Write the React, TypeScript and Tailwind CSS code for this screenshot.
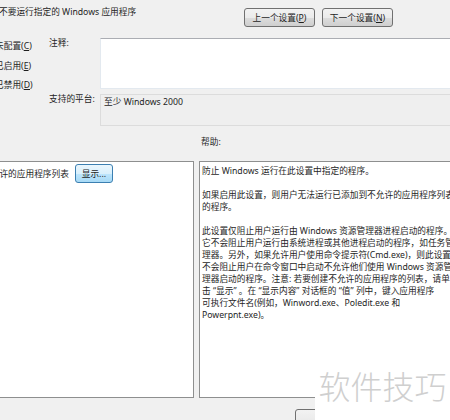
const btn =
  "flex items-center justify-center rounded-[3px] border border-[#707070] bg-[linear-gradient(#f2f2f2_0%,#ebebeb_50%,#dddddd_51%,#cfcfcf_100%)] text-[#1e1e1e]";

const helpLines: (string | null)[] = [
  "防止 Windows 运行在此设置中指定的程序。",
  null,
  "如果启用此设置，则用户无法运行已添加到不允许的应用程序列表",
  "的程序。",
  null,
  "此设置仅阻止用户运行由 Windows 资源管理器进程启动的程序。",
  "它不会阻止用户运行由系统进程或其他进程启动的程序，如任务管",
  "理器。另外，如果允许用户使用命令提示符(Cmd.exe)，则此设置",
  "不会阻止用户在命令窗口中启动不允许他们使用 Windows 资源管",
  "理器启动的程序。注意: 若要创建不允许的应用程序的列表，请单",
  "击 “显示” 。在 “显示内容” 对话框的 “值” 列中，键入应用程序",
  "可执行文件名(例如，Winword.exe、Poledit.exe 和",
  "Powerpnt.exe)。",
];

function Radio({ label, k }: { label: string; k: string }) {
  return (
    <div className="h-[13px] whitespace-nowrap">
      {label}(<span className="underline">{k}</span>)
    </div>
  );
}

export default function App() {
  return (
    <div className="relative w-[450px] h-[420px] overflow-hidden bg-[#f0f0f0] text-[8.7px] leading-[12px] text-[#1e1e1e] font-['Noto_Sans','Noto_Sans_CJK_SC',sans-serif]">
      {/* Header */}
      <div className="flex h-[38px]">
        <div className="w-[245px] shrink-0 -ml-[1px] pt-[6px] whitespace-nowrap">
          不要运行指定的 Windows 应用程序
        </div>
        <div className="flex gap-[7px] pt-[8px]">
          <button className={btn + " w-[71px] h-[19px]"}>
            上一个设置(<span className="underline">P</span>)
          </button>
          <button className={btn + " w-[71px] h-[19px]"}>
            下一个设置(<span className="underline">N</span>)
          </button>
        </div>
      </div>

      {/* State + comment */}
      <div className="flex">
        <div className="w-[54px] shrink-0 -ml-[5px] pt-[2px] flex flex-col gap-[6.5px]">
          <Radio label="未配置" k="C" />
          <Radio label="已启用" k="E" />
          <Radio label="已禁用" k="D" />
        </div>
        <div className="flex flex-col gap-[5px]">
          <div className="flex">
            <div className="w-[51px] shrink-0 -mt-[1px]">注释:</div>
            <div className="w-[400px] h-[51px] shrink-0 bg-white border border-[#e3e9ef] border-t-[#abadb3]" />
          </div>
          <div className="flex">
            <div className="w-[51px] shrink-0 -mt-[1px] whitespace-nowrap">支持的平台:</div>
            <div className="w-[400px] h-[32px] shrink-0 bg-[#efefef] border border-[#dcdcdc] pl-[3px] pt-[1px]">
              至少 Windows 2000
            </div>
          </div>
        </div>
      </div>

      {/* Options + help */}
      <div className="flex">
        <div className="w-[224px] shrink-0 -ml-[30px] mr-[5px]">
          <div className="h-[35px]" />
          <div className="h-[237px] bg-white border border-[#8e8f8f] pl-[11px] pt-[2px]">
            <div className="flex items-center gap-[6px]">
              <span className="whitespace-nowrap">不允许的应用程序列表</span>
              <button className="w-[38px] h-[19px] flex items-center justify-center rounded-[3px] border border-[#3c7fb1] bg-[linear-gradient(#eaf6fd_0%,#d9f0fc_50%,#bee6fd_51%,#a7d9f5_100%)]">
                显示...
              </button>
            </div>
          </div>
        </div>
        <div className="w-[300px] shrink-0">
          <div className="h-[35px] pt-[10px] pl-[2px]">帮助:</div>
          <div className="h-[237px] bg-white border border-[#8e8f8f] pl-[2px] pt-[3px]">
            {helpLines.map((l, i) => (
              <div key={i} className="h-[12px] whitespace-nowrap">
                {l ?? ""}
              </div>
            ))}
          </div>
        </div>
      </div>

      {/* Bottom buttons */}
      <div className="flex pl-[295px] pt-[11px]">
        <button className={btn + " w-[75px] h-[22px]"}>确定</button>
      </div>

      {/* Watermark */}
      <div className="absolute left-[315px] top-[362px] w-[135px] h-[58px] bg-white flex items-start justify-center">
        <span className="mt-[3px] text-[32px] leading-[40px] font-light text-[#cfcfcf] font-['Noto_Sans_CJK_SC',sans-serif]">
          软件技巧
        </span>
      </div>
    </div>
  );
}
